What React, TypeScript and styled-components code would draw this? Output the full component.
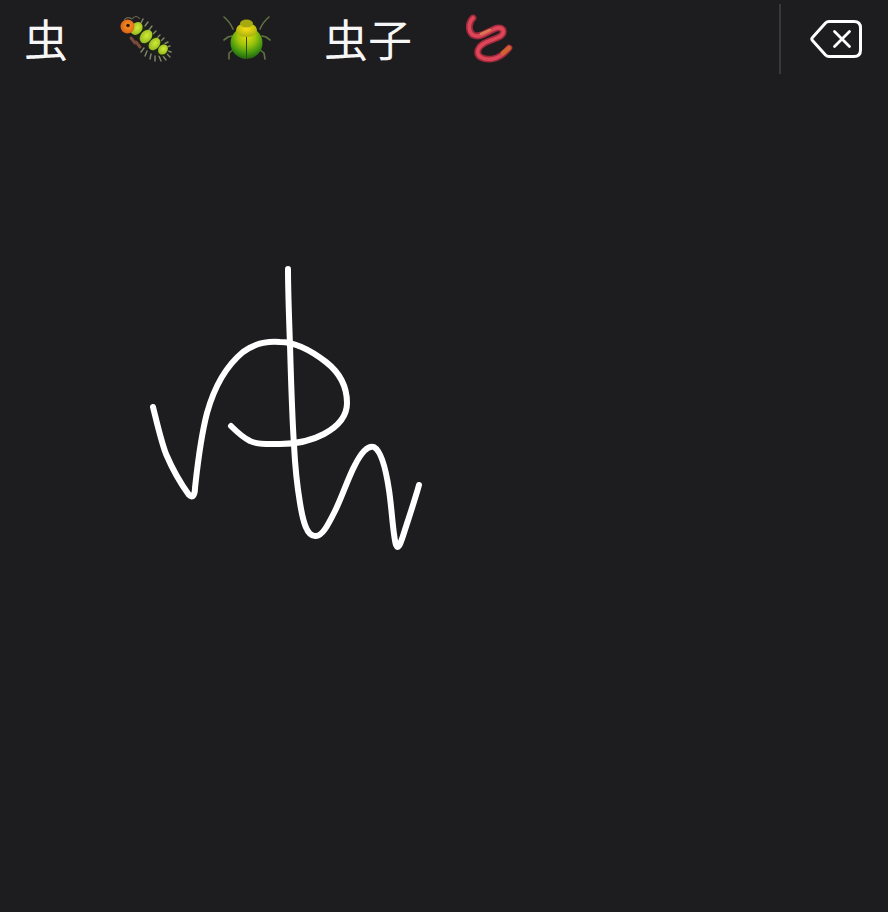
import { createGlobalStyle } from "styled-components";
import styled from "styled-components";

const GlobalStyle = createGlobalStyle`
  html, body {
    margin: 0;
    padding: 0;
    background-color: #1d1c1f;
  }
`;

const Screen = styled.div`
  width: 888px;
  height: 912px;
  display: flex;
  flex-direction: column;
  overflow: hidden;
  background-color: #1d1c1f;
`;

const Toolbar = styled.div`
  height: 77px;
  flex-shrink: 0;
  display: flex;
  align-items: center;
  padding-left: 24px;
`;

const Candidates = styled.div`
  flex: 1;
  display: flex;
  align-items: center;
  gap: 52px;
`;

const Word = styled.span`
  color: #f6f6f6;
  font-family: "Noto Sans CJK SC", sans-serif;
  font-size: 44px;
  font-weight: 400;
  line-height: 77px;
`;

const Divider = styled.div`
  width: 2px;
  height: 70px;
  background-color: #39383b;
`;

const DeleteButton = styled.button`
  width: 107px;
  height: 77px;
  padding: 0 0 0 28px;
  display: flex;
  align-items: center;
  background: none;
  border: 0;
`;

const Emoji = styled.svg`
  display: block;
  flex-shrink: 0;
  overflow: visible;
`;

const Canvas = styled.svg`
  flex: 1;
  display: block;
  width: 100%;
`;

function Caterpillar() {
  const bristles = [
    [141, 25, 143, 21], [145, 28, 148, 24], [149, 32, 152, 28], [153, 36, 156, 33],
    [157, 40, 160, 37], [161, 43, 164, 40], [164, 46, 168, 44], [167, 49, 170, 48],
    [168, 53, 171, 54], [167, 56, 170, 59], [163, 58, 166, 62], [159, 58, 161, 63],
    [155, 58, 155, 63], [151, 56, 150, 61], [147, 53, 145, 58], [144, 50, 141, 54],
  ];
  return (
    <Emoji width="50" height="48" viewBox="120 17 50 48">
      <defs>
        <radialGradient id="head" cx="0.55" cy="0.45" r="0.6">
          <stop offset="0" stopColor="#f79a1e" />
          <stop offset="1" stopColor="#d95c18" />
        </radialGradient>
        <radialGradient id="segment" cx="0.5" cy="0.42" r="0.7">
          <stop offset="0" stopColor="#d2ea36" />
          <stop offset="1" stopColor="#86ae1c" />
        </radialGradient>
      </defs>
      {bristles.map(([x1, y1, x2, y2]) => (
        <line key={`${x1}-${y1}`} x1={x1} y1={y1} x2={x2} y2={y2} stroke="#80886a" strokeWidth="1.400" strokeLinecap="round" />
      ))}
      <path d="M124 22 Q127 18 132 21 M132 21 Q136 16 140 21" fill="none" stroke="#6f6a50" strokeWidth="1.200" />
      <path d="M131 40 L135 45 M136 44 L140 49" stroke="#7a4a3a" strokeWidth="3" strokeLinecap="round" />
      <path d="M138 32 L162 52" fill="none" stroke="#1f2612" strokeWidth="13" strokeLinecap="round" />
      <ellipse cx="163" cy="51.500" rx="4.500" ry="5.500" fill="url(#segment)" transform="rotate(40 163 51.500)" />
      <ellipse cx="154.500" cy="46" rx="5" ry="7" fill="url(#segment)" transform="rotate(40 154.500 46)" />
      <ellipse cx="146" cy="38.500" rx="5.500" ry="7.500" fill="url(#segment)" transform="rotate(40 146 38.500)" />
      <ellipse cx="136.500" cy="30.500" rx="5.500" ry="7" fill="url(#segment)" transform="rotate(40 136.500 30.500)" />
      <circle cx="127.500" cy="28.500" r="7" fill="url(#head)" />
      <circle cx="128" cy="27.500" r="1.800" fill="#3a1208" />
    </Emoji>
  );
}

function Beetle() {
  return (
    <Emoji width="50" height="48" viewBox="222 16 50 48">
      <defs>
        <radialGradient id="shell" cx="0.5" cy="0.3" r="0.75">
          <stop offset="0" stopColor="#e8dc0c" />
          <stop offset="0.38" stopColor="#9cc40c" />
          <stop offset="0.72" stopColor="#3f9410" />
          <stop offset="1" stopColor="#1a560e" />
        </radialGradient>
        <radialGradient id="thorax" cx="0.5" cy="0.4" r="0.7">
          <stop offset="0" stopColor="#fbe016" />
          <stop offset="1" stopColor="#9aa80c" />
        </radialGradient>
      </defs>
      <path
        d="M233 30 Q230 23 224 18 M260 30 Q263 23 269 18 M232 37 L228 38 L224 41 M262 37 L266 38 L270 41 M234 50 L229 54 L229 60 M259 50 L264 54 L265 60"
        fill="none"
        stroke="#5f7440"
        strokeWidth="1.600"
        strokeLinecap="round"
        strokeLinejoin="round"
      />
      <ellipse cx="246.500" cy="44" rx="16" ry="16" fill="url(#shell)" />
      <line x1="246.500" y1="35" x2="246.500" y2="60" stroke="#2f4e0c" strokeWidth="1" />
      <ellipse cx="246.500" cy="31" rx="10.500" ry="7" fill="url(#thorax)" />
      <ellipse cx="246.500" cy="24.500" rx="6.500" ry="4" fill="#a6aa10" />
    </Emoji>
  );
}

function Worm() {
  const path = "M473 19 C468 24 468 32 473 36 C481 40 489 31 497 29 C505 28 505 35 499 38 C491 42 481 43 478 51 C476 58 484 61 492 60 C500 59 505 54 509 49";
  return (
    <Emoji width="48" height="50" viewBox="464 15 48 50">
      <path d={path} fill="none" stroke="#a02a3c" strokeWidth="6.800" strokeLinecap="round" />
      <path d={path} fill="none" stroke="#dd4658" strokeWidth="3.600" strokeLinecap="round" />
      <path d="M503 54 L509 49" fill="none" stroke="#cf6430" strokeWidth="4.500" strokeLinecap="round" />
      <path d="M481 35 L490 31" fill="none" stroke="#d87a50" strokeWidth="2.600" strokeLinecap="round" />
    </Emoji>
  );
}

function DeleteIcon() {
  return (
    <svg width="54" height="40" viewBox="809 21 54 40">
      <path
        d="M829 23.500 H854 Q860.500 23.500 860.500 30 V52 Q860.500 58.500 854 58.500 H829 Q827 58.500 825.500 57 L812.500 42.500 Q811 41 812.500 39.500 L825.500 25 Q827 23.500 829 23.500 Z"
        fill="none"
        stroke="#ffffff"
        strokeWidth="3"
      />
      <path d="M834.500 33.500 L849.500 48.500 M849.500 33.500 L834.500 48.500" stroke="#ffffff" strokeWidth="2.800" strokeLinecap="round" />
    </svg>
  );
}

export default function App() {
  return (
    <>
      <GlobalStyle />
      <Screen>
        <Toolbar>
          <Candidates>
            <Word>虫</Word>
            <Caterpillar />
            <Beetle />
            <Word>虫子</Word>
            <Worm />
          </Candidates>
          <Divider />
          <DeleteButton>
            <DeleteIcon />
          </DeleteButton>
        </Toolbar>
        <Canvas viewBox="0 77 888 835">
          <g fill="none" stroke="#ffffff" strokeWidth="6" strokeLinecap="round" strokeLinejoin="round">
            <path d="M153 407 C157 423 161 441 166 454 C172 468 181 484 189 495 C193 499 195 494 195 488 C197 470 200 440 207 413 C214 388 226 366 243 352 C255 343 268 341 280 342 C296 342 313 352 326 362 C340 373 347 388 347 403 C347 418 337 427 324 434 C311 441 297 444 280 444 C270 444 257 445 250 441 C242 437 236 431 231 426" />
            <path d="M288 269 C288 290 289 318 290 345 C291 380 292 415 294 445 C295 465 297 485 300 503 C303 522 307 536 315 536 C322 537 328 525 335 511 C342 497 348 478 355 465 C361 453 368 445 374 447 C381 451 386 470 389 490 C392 510 393 535 396 545 C398 550 400 545 403 536 C408 520 414 503 419 485" />
          </g>
        </Canvas>
      </Screen>
    </>
  );
}
